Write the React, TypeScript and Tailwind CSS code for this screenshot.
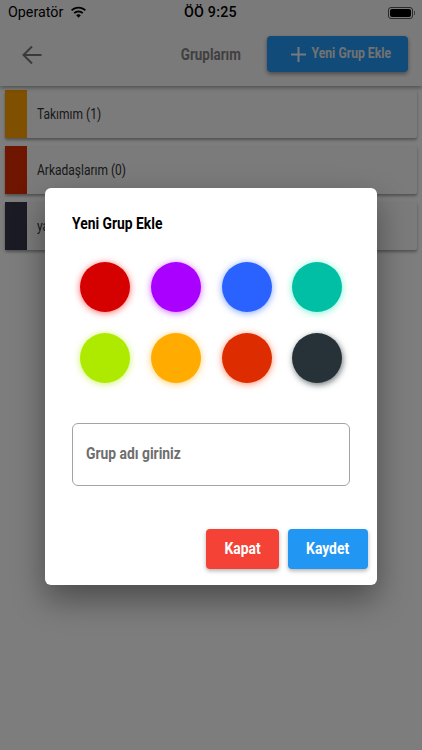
import React from "react";

const font = { fontFamily: '"Roboto", "Liberation Sans", sans-serif' };

function Cond({ children, className = "" }: { children: React.ReactNode; className?: string }) {
  return <span className={`inline-block whitespace-nowrap scale-x-[0.84] ${className}`}>{children}</span>;
}

const rows = [
  { color: "bg-[#ffa000]", label: "Takımım (1)" },
  { color: "bg-[#dd2c00]", label: "Arkadaşlarım (0)" },
  { color: "bg-[#37374a]", label: "ya" },
];

const circles = [
  ["bg-[#d50000]", "shadow-[0_1px_7px_#ff000099]"],
  ["bg-[#aa00ff]", "shadow-[0_1px_7px_#aa00ff99]"],
  ["bg-[#2962ff]", "shadow-[0_1px_7px_#2962ff99]"],
  ["bg-[#00bfa5]", "shadow-[0_1px_7px_#1de9b699]"],
  ["bg-[#aeea00]", "shadow-[0_1px_7px_#aeea0099]"],
  ["bg-[#ffab00]", "shadow-[0_1px_7px_#ffab0099]"],
  ["bg-[#dd2c00]", "shadow-[0_1px_7px_#ff3d0099]"],
  ["bg-[#263238]", "shadow-[1px_2px_6px_#263238aa]"],
];

export default function App() {
  return (
    <div style={font} className="relative w-[422px] h-[750px] overflow-hidden bg-[#fafafa]">
      <div className="h-[86px] bg-[#f5f5f5] shadow-[0_2px_4px_rgba(0,0,0,0.35)] relative z-10">
        <div className="h-[24px] flex items-center justify-between pl-2 pr-[7px] pt-[1px] relative">
          <div className="flex items-center gap-[7px]">
            <span className="text-[14.3px] text-black">Operatör</span>
            <svg width="17" height="13" viewBox="0 0 17 13" fill="black">
              <path d="M8.5 2.6c2.4 0 4.6.9 6.3 2.5l1.2-1.3C14 1.9 11.3.8 8.5.8S3 1.9 1 3.8l1.2 1.3C3.9 3.5 6.1 2.6 8.5 2.6z" />
              <path d="M8.5 6.4c1.4 0 2.6.5 3.6 1.4l1.3-1.3C12 5.2 10.3 4.5 8.5 4.5s-3.500.7-4.900 2l1.300 1.300c1-.9 2.200-1.400 3.600-1.400z" />
              <path d="M8.500 8.300c-.9 0-1.700.3-2.300.9l2.300 2.500 2.300-2.500c-.6-.6-1.400-.9-2.300-.9z" />
            </svg>
          </div>
          <span className="absolute left-[184px] text-[14.3px] font-medium text-black tracking-[0.2px]">ÖÖ 9:25</span>
          <div className="flex items-center gap-[1px]">
            <div className="w-[25px] h-[12px] rounded-[3px] border border-[#555] p-[1px]">
              <div className="w-full h-full rounded-[2px] bg-black" />
            </div>
            <div className="w-[1px] h-[4px] bg-[#777]" />
          </div>
        </div>
        <div className="h-[62px] flex items-center relative">
          <svg className="ml-[21px]" width="22" height="22" viewBox="0 0 22 22" fill="none" stroke="#757575" strokeWidth="2">
            <path d="M20.500 11H2.500M11 2.500 2.500 11l8.500 8.500" />
          </svg>
          <span className="absolute left-[180px] w-[62px] text-[16px] font-bold text-[#808080] text-center flex justify-center">
            <Cond>Gruplarım</Cond>
          </span>
          <div className="absolute left-[267px] top-[12px] w-[141px] h-[36px] rounded-[4px] bg-[#2196f3] shadow-[0_2px_4px_rgba(0,0,0,0.4)] flex items-center pl-[23px]">
            <svg width="17" height="17" viewBox="0 0 17 17" stroke="#fff" strokeOpacity="0.9" strokeWidth="2">
              <path d="M8.500 1v15M1 8.500h15" />
            </svg>
            <span className="ml-[5px] w-[78px] text-[14.500px] font-bold text-[#e4e4e4] flex justify-center">
              <Cond>Yeni Grup Ekle</Cond>
            </span>
          </div>
        </div>
      </div>

      <div className="px-[5px] pt-[4px] flex flex-col gap-[8.500px]">
        {rows.map((r) => (
          <div key={r.label} className="h-[47.500px] flex items-center bg-[#f7f7f7] rounded-[2px] shadow-[0_2px_3px_rgba(0,0,0,0.35)]">
            <div className={`w-[22px] h-full ${r.color}`} />
            <span className="ml-[10px] w-[80px] text-[15px] text-[#333] flex">
              <span className="inline-block whitespace-nowrap scale-x-[0.8] origin-left">{r.label}</span>
            </span>
          </div>
        ))}
      </div>

      <div className="absolute inset-0 z-20 bg-black/50" />

      <div className="absolute z-30 left-[45px] top-[188px] w-[332px] h-[397px] rounded-[6px] bg-white shadow-[0_14px_32px_rgba(0,0,0,0.4)] flex flex-col">
        <div className="pl-[27px] pt-[25px] h-[50px] text-[16.500px] leading-[22px] font-bold text-black">
          <Cond className="origin-left">Yeni Grup Ekle</Cond>
        </div>
        <div className="ml-[35px] mt-[24px] w-[262px] grid grid-cols-4 gap-x-[21px] gap-y-[21px]">
          {circles.map(([c, s], i) => (
            <div key={i} className={`w-[50px] h-[50px] rounded-full ${c} ${s}`} />
          ))}
        </div>
        <div className="ml-[27px] mt-[40px] w-[278px] h-[63px] rounded-[6px] border border-[#a3a3a3] flex items-center pl-[13px]">
          <span className="text-[16.500px] font-bold text-[#6e6e6e]">
            <Cond className="origin-left">Grup adı giriniz</Cond>
          </span>
        </div>
        <div className="mt-[42.500px] flex justify-end gap-[9px] pr-[9px]">
          <div className="w-[73px] h-[40px] pt-[1px] rounded-[4px] bg-[#f44336] shadow-[0_2px_4px_rgba(0,0,0,0.3)] flex items-center justify-center text-[16.500px] font-bold text-white">
            <Cond>Kapat</Cond>
          </div>
          <div className="w-[80px] h-[40px] pt-[1px] rounded-[4px] bg-[#2196f3] shadow-[0_2px_4px_rgba(0,0,0,0.3)] flex items-center justify-center text-[16.500px] font-bold text-white">
            <Cond>Kaydet</Cond>
          </div>
        </div>
      </div>
    </div>
  );
}
